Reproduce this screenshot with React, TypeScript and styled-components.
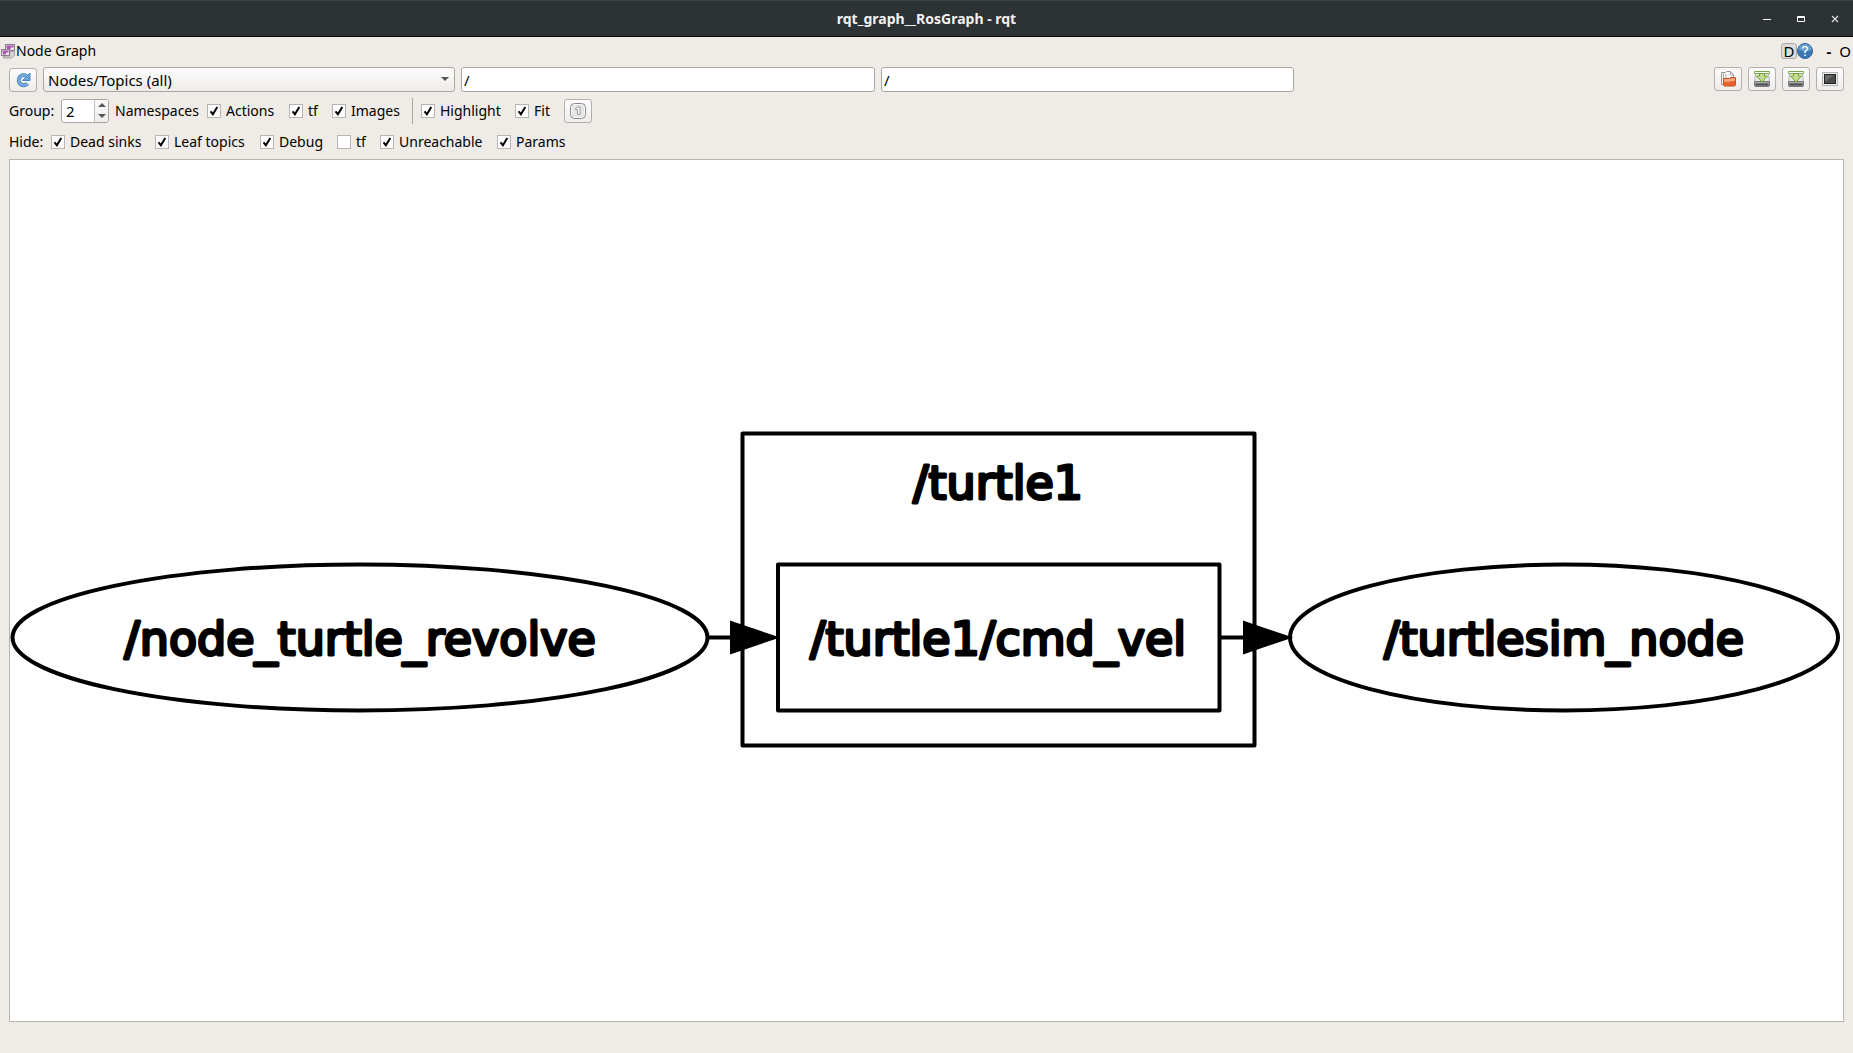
import React from 'react';
import styled, { createGlobalStyle } from 'styled-components';

const Global = createGlobalStyle`
  * { box-sizing: border-box; }
  html, body, #root { height: 100%; margin: 0; }
  body { background: #efebe7; color: #000; font: 14px/20px "Noto Sans", "Open Sans", sans-serif; }
  button, input, select { font: inherit; color: inherit; margin: 0; }
`;

const Window = styled.div`
  min-height: 100%;
  display: flex;
  flex-direction: column;
`;

const TitleBar = styled.header`
  height: 37px;
  flex: none;
  display: grid;
  grid-template-columns: 1fr auto 1fr;
  align-items: center;
  background: #2d3234;
  border-top: 1px solid #3c4143;
  border-bottom: 1px solid #080a0a;
  color: #f2f1f0;
`;

const Title = styled.h1`
  grid-column: 2;
  margin: 0;
  font-size: 14px;
  line-height: 20px;
  font-weight: 700;
`;

const WindowButtons = styled.div`
  justify-self: end;
  display: flex;
  gap: 18px;
  padding-right: 10px;
`;

const PlainButton = styled.button`
  border: 0;
  padding: 0;
  background: none;
  display: flex;
  align-items: center;
  justify-content: center;
`;

const CaptionButton = styled(PlainButton)`
  width: 16px;
  height: 16px;
`;

const DockTitle = styled.div`
  height: 28px;
  flex: none;
  display: flex;
  align-items: center;
`;

const DockName = styled.span`
  flex: 1;
`;

const DockButtons = styled.div`
  display: flex;
  align-items: center;
`;

const DockD = styled.button`
  width: 16px;
  height: 16px;
  padding: 0;
  border: 1px solid #b0aaa6;
  border-radius: 3px;
  background: #dfdbd8;
  font-size: 15px;
  line-height: 14px;
`;

const DockText = styled(PlainButton)<{ $bold?: boolean }>`
  width: 16px;
  height: 16px;
  font-size: 15px;
  font-weight: ${(p) => (p.$bold ? 700 : 400)};
`;

const DockPair = styled.div`
  display: flex;
  padding-left: 8px;
`;

const Row = styled.div<{ $height: number }>`
  flex: none;
  display: flex;
  align-items: center;
  height: ${(p) => p.$height}px;
  padding: 0 9px;
`;

const ToolButton = styled.button`
  width: 28px;
  height: 24px;
  flex: none;
  padding: 0;
  display: flex;
  align-items: center;
  justify-content: center;
  border: 1px solid #b3afac;
  border-radius: 3px;
  background: linear-gradient(#fdfdfd, #eeecea);
`;

const Filters = styled.div`
  flex: 1;
  display: grid;
  grid-template-columns: 412fr 414fr 413fr 544fr;
  gap: 6px;
  padding-left: 6px;
`;

const SelectBox = styled.div`
  display: grid;
  align-items: center;
  & > * { grid-area: 1 / 1; }
  & > svg { justify-self: end; margin-right: 6px; pointer-events: none; }
`;

const Select = styled.select`
  appearance: none;
  width: 100%;
  height: 25px;
  padding: 0 4px;
  border: 1px solid #a9a5a2;
  border-radius: 3px;
  background: linear-gradient(#fcfcfc, #eeecea);
  font-size: 15px;
`;

const TextBox = styled.input`
  width: 100%;
  min-width: 0;
  height: 25px;
  padding: 0 2px;
  border: 1px solid #a9a5a2;
  border-radius: 3px;
  background: #fff;
  outline: 0;
  font-size: 15px;
`;

const Tools = styled.div`
  display: flex;
  gap: 6px;
  justify-content: flex-end;
`;

const Label = styled.label<{ $width: number }>`
  width: ${(p) => p.$width}px;
  flex: none;
  white-space: nowrap;
`;

const GroupCaption = styled(Label).attrs({ as: 'span' })``;

const Spin = styled.div`
  display: flex;
  width: 48px;
  height: 24px;
  margin-right: 6px;
  border: 1px solid #a9a5a2;
  border-radius: 3px;
  background: #fff;
  overflow: hidden;
`;

const SpinInput = styled.input`
  flex: 1;
  min-width: 0;
  padding: 0 4px;
  border: 0;
  background: none;
  outline: 0;
  font-size: 15px;
`;

const SpinArrows = styled.div`
  width: 14px;
  display: grid;
  grid-template-rows: 1fr 1fr;
  border-left: 1px solid #c4c0bd;
  background: linear-gradient(#fcfcfc, #eeecea);
`;

const Check = styled.label<{ $width: number }>`
  width: ${(p) => p.$width}px;
  flex: none;
  display: flex;
  align-items: center;
  gap: 5px;
  white-space: nowrap;
`;

const CheckBox = styled.span`
  display: grid;
  & > * { grid-area: 1 / 1; }
  & > svg { pointer-events: none; visibility: hidden; }
  & > input:checked + svg { visibility: visible; }
`;

const CheckInput = styled.input`
  appearance: none;
  width: 14px;
  height: 14px;
  border: 1px solid #b8b4b1;
  background: #fff;
`;

const Divider = styled.span`
  width: 1px;
  height: 26px;
  margin-right: 8px;
  background: #aaa6a3;
`;

const Canvas = styled.main`
  flex: 1;
  min-height: 0;
  margin: 2px 9px 31px;
  border: 1px solid #b8b4b1;
  background: #fff;
  display: flex;
`;

const Graph = styled.svg`
  display: block;
  width: 100%;
  flex: 1;
  font-family: "DejaVu Sans", sans-serif;
  font-size: 46px;
`;

function CheckItem({ name, width, on = true, id }: { name: string; width: number; on?: boolean; id: string }) {
  return (
    <Check $width={width} htmlFor={id}>
      <CheckBox>
        <CheckInput type="checkbox" id={id} defaultChecked={on} />
        <svg width="14" height="14" viewBox="0 0 14 14" aria-hidden="true">
          <path d="M3.5 7.3 L5.9 10.2 L10.3 3" fill="none" stroke="#000" strokeWidth="2" />
        </svg>
      </CheckBox>
      {name}
    </Check>
  );
}

function SaveIcon() {
  return (
    <svg width="18" height="18" viewBox="0 0 18 18">
      <path d="M2.5 3.5h13l1 9h-15z" fill="#e9e9e7" stroke="#b4b6b2" />
      <path d="M1.5 11.5h15v3.500q0 1.500-1.500 1.500h-12q-1.500 0-1.500-1.500z" fill="#a5a6a7" stroke="#77797b" />
      <path d="M2.500 14.500h13" stroke="#4b4d50" strokeWidth="2" />
      <path d="M1.500 1.500h15v2h-15z" fill="#fff" stroke="#7aa648" />
      <path d="M6.500 3.500h5v2.500h3l-5.500 6-5.500-6h3z" fill="#c2dc8c" stroke="#72a338" />
    </svg>
  );
}

export default function App() {
  return (
    <Window>
      <Global />
      <TitleBar>
        <Title>rqt_graph__RosGraph - rqt</Title>
        <WindowButtons>
          <CaptionButton aria-label="Minimize">
            <svg width="16" height="16"><path d="M4 8.500h8" stroke="#fff" /></svg>
          </CaptionButton>
          <CaptionButton aria-label="Maximize">
            <svg width="16" height="16"><path d="M4.500 5.500h7v5h-7zM4 6.500h8" fill="none" stroke="#fff" /></svg>
          </CaptionButton>
          <CaptionButton aria-label="Close">
            <svg width="16" height="16"><path d="M5 5l6 6M11 5l-6 6" stroke="#ddd" strokeWidth="1.200" /></svg>
          </CaptionButton>
        </WindowButtons>
      </TitleBar>

      <DockTitle>
        <svg width="16" height="16" viewBox="0 0 16 16" aria-hidden="true">
          <path d="M10 8.500h4.500v4l-3 2.500h-8v-2h6z" fill="#d6d4d2" stroke="#a3a1a0" />
          <rect x="5.500" y="1.500" width="9" height="6" fill="#efe3f0" stroke="#8a7b8d" />
          <path d="M6.500 3.500h7M7 5.500h3.500" stroke="#a659a8" strokeWidth="2" />
          <rect x="1.500" y="6.500" width="8" height="6" fill="#efe3f0" stroke="#8a7b8d" />
          <path d="M2.500 8.500h6M3 10.500h3" stroke="#a659a8" strokeWidth="2" />
        </svg>
        <DockName>Node Graph</DockName>
        <DockButtons>
          <DockD>D</DockD>
          <PlainButton aria-label="Help">
            <svg width="16" height="16" viewBox="0 0 16 16">
              <circle cx="8" cy="8" r="7.500" fill="#3c78b4" stroke="#2d6396" />
              <path d="M1.500 7a6.500 6 0 0 1 13 0q-6 2-13 0" fill="#6b9fd0" />
              <path d="M5.500 5.500q.5-2 2.500-2t2.500 2q0 1.500-2.500 3v1.500M8 11.500v1.500" fill="none" stroke="#fff" strokeWidth="1.500" />
            </svg>
          </PlainButton>
          <DockPair>
            <DockText $bold>-</DockText>
            <DockText>O</DockText>
          </DockPair>
        </DockButtons>
      </DockTitle>

      <Row $height={29}>
        <ToolButton aria-label="Refresh graph">
          <svg width="16" height="16" viewBox="0 0 16 16">
            <path d="M11.500 4A5 5 0 1 0 12.500 11.500" fill="none" stroke="#4a86c2" strokeWidth="4" />
            <path d="M15 1v7.500h-7.500l2.500-2.500 2.500-2.500z" fill="#6fa4d8" stroke="#4a86c2" />
            <path d="M11.500 4A5 5 0 1 0 12.500 11.500" fill="none" stroke="#7fb0df" strokeWidth="2" />
          </svg>
        </ToolButton>
        <Filters>
          <SelectBox>
            <Select aria-label="Graph type" defaultValue="all">
              <option value="all">Nodes/Topics (all)</option>
            </Select>
            <svg width="8" height="5" aria-hidden="true"><path d="M0 0h8l-4 4z" fill="#555" /></svg>
          </SelectBox>
          <TextBox aria-label="Node filter" defaultValue="/" />
          <TextBox aria-label="Topic filter" defaultValue="/" />
          <Tools>
            <ToolButton aria-label="Load DOT graph">
              <svg width="18" height="18" viewBox="0 0 18 18">
                <path d="M2.500 14.500v-12h4l1-1h4l3 3v10z" fill="#f7f7f6" stroke="#979997" />
                <path d="M4.500 3v11M7 4v4M11.500 2v3h3" stroke="#aaa" fill="none" />
                <path d="M4.500 8.500h6l1.500-1h4.500v7q0 1.500-1.500 1.500h-9q-1.500 0-1.500-1.500z" fill="#e8622c" stroke="#cf4a20" />
                <path d="M5 9h6l1.500-1h3.500v3l-11 1z" fill="#f6a878" />
              </svg>
            </ToolButton>
            <ToolButton aria-label="Save as DOT graph"><SaveIcon /></ToolButton>
            <ToolButton aria-label="Save as SVG"><SaveIcon /></ToolButton>
            <ToolButton aria-label="Save as image">
              <svg width="16" height="16" viewBox="0 0 16 16">
                <rect x=".5" y="1.500" width="15" height="13" fill="#eee" stroke="#b5b5b5" />
                <rect x="2.500" y="3.500" width="11" height="9" fill="#4a4a4a" stroke="#222" />
                <path d="M3 4h9l-9 7z" fill="#696969" />
              </svg>
            </ToolButton>
          </Tools>
        </Filters>
      </Row>

      <Row $height={33}>
        <Label $width={52} htmlFor="group">Group:</Label>
        <Spin>
          <SpinInput id="group" defaultValue="2" />
          <SpinArrows>
            <PlainButton aria-label="Increase"><svg width="8" height="4"><path d="M0 4l4-4 4 4z" fill="#555" /></svg></PlainButton>
            <PlainButton aria-label="Decrease"><svg width="8" height="4"><path d="M0 0l4 4 4-4z" fill="#555" /></svg></PlainButton>
          </SpinArrows>
        </Spin>
        <Label $width={92} htmlFor="group">Namespaces</Label>
        <CheckItem id="actions" name="Actions" width={82} />
        <CheckItem id="tf" name="tf" width={43} />
        <CheckItem id="images" name="Images" width={80} />
        <Divider />
        <CheckItem id="highlight" name="Highlight" width={94} />
        <CheckItem id="fit" name="Fit" width={49} />
        <ToolButton aria-label="Fit in view">
          <svg width="16" height="16" viewBox="0 0 16 16">
            <rect x=".5" y=".5" width="15" height="15" rx="4" fill="#fafafa" stroke="#888" />
            <rect x="2" y="2" width="12" height="12" rx="2" fill="#e6e6e5" />
            <path d="M5.500 5.500l2-1.500h2.500v7.500h-2.500v-5h-2z" fill="#fff" stroke="#999" />
          </svg>
        </ToolButton>
      </Row>

      <Row $height={30}>
        <GroupCaption $width={42}>Hide:</GroupCaption>
        <CheckItem id="dead-sinks" name="Dead sinks" width={104} />
        <CheckItem id="leaf-topics" name="Leaf topics" width={105} />
        <CheckItem id="debug" name="Debug" width={77} />
        <CheckItem id="hide-tf" name="tf" width={43} on={false} />
        <CheckItem id="unreachable" name="Unreachable" width={117} />
        <CheckItem id="params" name="Params" width={80} />
      </Row>

      <Canvas>
        <Graph viewBox="10 160 1833 861" role="img" aria-label="Node graph">
          <g fill="none" stroke="#000" strokeWidth="4" strokeLinejoin="round">
            <rect x="742.500" y="433.500" width="512" height="312" />
            <rect x="778" y="564.500" width="441.500" height="146" />
            <ellipse cx="360" cy="637.500" rx="347.500" ry="73" />
            <ellipse cx="1564" cy="637.500" rx="274" ry="73" />
            <path d="M708 637.500h24M1220 637.500h24" />
          </g>
          <path d="M731 622l46 15.500-46 15.500zM1244 622l46 15.500-46 15.500z" stroke="#000" strokeWidth="2" />
          <g textAnchor="middle" stroke="#000" strokeWidth="3" strokeLinejoin="round">
            <text x="998" y="499">/turtle1</text>
            <text x="360" y="655">/node_turtle_revolve</text>
            <text x="998" y="655">/turtle1/cmd_vel</text>
            <text x="1564" y="655">/turtlesim_node</text>
          </g>
        </Graph>
      </Canvas>
    </Window>
  );
}
